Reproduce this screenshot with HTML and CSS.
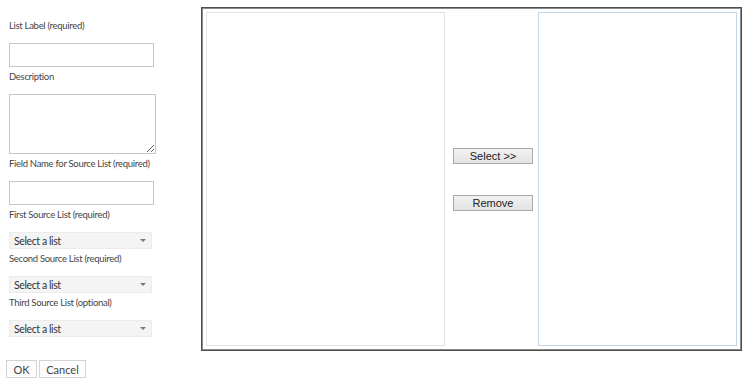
FILE: index.html
```html
<!DOCTYPE html>
<html>
<head>
<meta charset="utf-8">
<link rel="stylesheet" href="styles.css">
</head>
<body>
<div class="main">
  <div class="form">
    <div class="label">List Label (required)</div>
    <input class="text" type="text">
    <div class="label">Description</div>
    <textarea class="area"></textarea>
    <div class="label">Field Name for Source List (required)</div>
    <input class="text" type="text">
    <div class="label">First Source List (required)</div>
    <div class="select"><span>Select a list</span><i class="arrow"></i></div>
    <div class="label">Second Source List (required)</div>
    <div class="select"><span>Select a list</span><i class="arrow"></i></div>
    <div class="label">Third Source List (optional)</div>
    <div class="select"><span>Select a list</span><i class="arrow"></i></div>
  </div>
  <div class="picker">
    <div class="list list-source"></div>
    <div class="mid">
      <button class="mv">Select &gt;&gt;</button>
      <button class="mv">Remove</button>
    </div>
    <div class="list list-target"></div>
  </div>
</div>
<div class="actions">
  <button class="act ok">OK</button>
  <button class="act cancel">Cancel</button>
</div>
</body>
</html>
```
FILE: styles.css
```css
html, body { margin: 0; padding: 0; background: #fff; }
body { font-family: Lato, "Open Sans", sans-serif; color: #444; }
.main { display: flex; align-items: flex-start; }
.form { width: 192px; padding: 16px 0 0 9px; display: flex; flex-direction: column; align-items: flex-start; }
.label { font-size: 9.5px; letter-spacing: -0.3px; line-height: 14px; margin: 3px 0 10px; color: #444; white-space: nowrap; }
.text { box-sizing: border-box; width: 145px; height: 24px; margin: 0; border: 1px solid #c6c6c6; padding: 0 4px; background: #fff; outline: none; }
.area { box-sizing: border-box; width: 147px; height: 60px; margin: 0; border: 1px solid #c6c6c6; background: #fff; resize: both; outline: none; display: block; }
.select { box-sizing: border-box; width: 143px; height: 17px; border: 1px solid #ececec; background: #f4f4f4; display: flex; align-items: center; justify-content: space-between; padding: 0 5px 0 4px; font-size: 10.5px; letter-spacing: -0.4px; color: #333; }
.arrow { width: 0; height: 0; border-left: 3px solid transparent; border-right: 3px solid transparent; border-top: 3px solid #777; }
.picker { box-sizing: border-box; width: 541px; height: 344px; margin: 7px 0 0 0; border: 1px solid #4e4e4e; box-shadow: inset 0 0 0 1px #8a8a8a; padding: 4px; display: flex; }
.list { box-sizing: border-box; height: 100%; background: #fff; }
.list-source { width: 239px; border: 1px solid #e2e2e2; }
.list-target { width: 199px; border: 1px solid #c3d5ea; }
.mid { flex: 1; display: flex; flex-direction: column; justify-content: center; gap: 31px; padding: 0 5px 0 8px; }
.mv { box-sizing: border-box; width: 80px; height: 16px; margin: 0; padding: 0; border: 1px solid #a9a9a9; background: linear-gradient(#f2f2f2, #e3e3e3); font-family: "Liberation Sans", Arial, sans-serif; font-size: 11px; color: #222; }
.actions { display: flex; gap: 2px; padding: 9px 0 0 6px; }
.act { box-sizing: border-box; height: 18px; margin: 0; padding: 0; border: 1px solid #d4d4d4; background: #fdfdfd; font-family: Lato, "Open Sans", sans-serif; font-size: 11px; color: #444; }
.ok { width: 31px; }
.cancel { width: 47px; }
```
